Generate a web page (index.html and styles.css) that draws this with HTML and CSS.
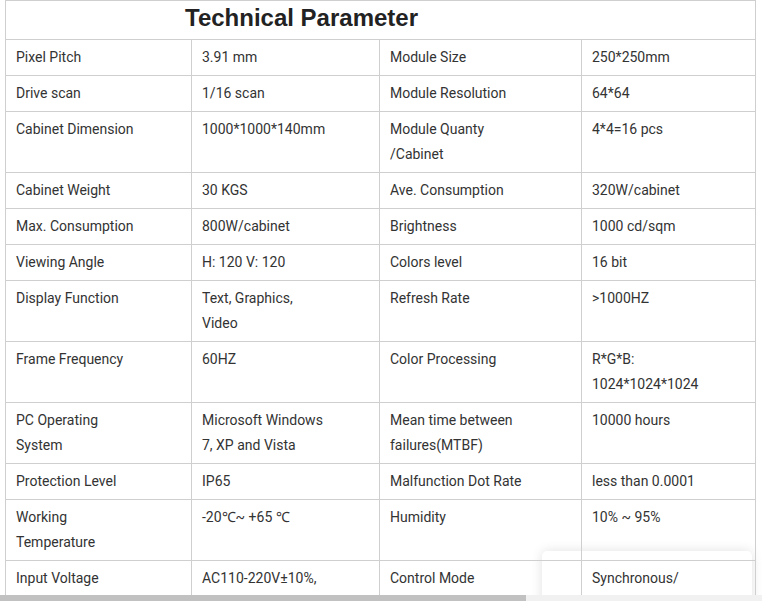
FILE: index.html
```html
<!DOCTYPE html>
<html lang="en">
<head>
<meta charset="utf-8">
<title>Technical Parameter</title>
<link rel="stylesheet" href="styles.css">
</head>
<body>
<div class="page">
  <div class="float-card"></div>
  <table class="spec">
    <colgroup>
      <col class="c1"><col class="c2"><col class="c3"><col class="c4">
    </colgroup>
    <thead>
      <tr><th colspan="4" class="title">Technical Parameter</th></tr>
    </thead>
    <tbody>
      <tr><td>Pixel Pitch</td><td>3.91 mm</td><td>Module Size</td><td>250*250mm</td></tr>
      <tr><td>Drive scan</td><td>1/16 scan</td><td>Module Resolution</td><td>64*64</td></tr>
      <tr><td>Cabinet Dimension</td><td>1000*1000*140mm</td><td>Module Quanty<br>/Cabinet</td><td>4*4=16 pcs</td></tr>
      <tr><td>Cabinet Weight</td><td>30 KGS</td><td>Ave. Consumption</td><td>320W/cabinet</td></tr>
      <tr><td>Max. Consumption</td><td>800W/cabinet</td><td>Brightness</td><td>1000 cd/sqm</td></tr>
      <tr><td>Viewing Angle</td><td>H: 120 V: 120</td><td>Colors level</td><td>16 bit</td></tr>
      <tr><td>Display Function</td><td>Text, Graphics,<br>Video</td><td>Refresh Rate</td><td>&gt;1000HZ</td></tr>
      <tr><td>Frame Frequency</td><td>60HZ</td><td>Color Processing</td><td>R*G*B:<br>1024*1024*1024</td></tr>
      <tr><td>PC Operating<br>System</td><td>Microsoft Windows<br>7, XP and Vista</td><td>Mean time between<br>failures(MTBF)</td><td>10000 hours</td></tr>
      <tr><td>Protection Level</td><td>IP65</td><td>Malfunction Dot Rate</td><td>less than 0.0001</td></tr>
      <tr><td>Working<br>Temperature</td><td>-20℃~ +65 ℃</td><td>Humidity</td><td>10% ~ 95%</td></tr>
      <tr><td>Input Voltage</td><td>AC110-220V±10%,</td><td>Control Mode</td><td>Synchronous/</td></tr>
    </tbody>
  </table>
</div>
<div class="hscroll"><div class="hscroll-thumb"></div></div>
</body>
</html>
```

FILE: styles.css
```css
html, body {
  margin: 0;
  padding: 0;
  background: #fff;
  overflow: hidden;
  height: 601px;
}

.page {
  position: relative;
  padding-left: 5px;
}

.spec {
  position: relative;
  z-index: 1;
  border-collapse: collapse;
  table-layout: fixed;
  width: 750px;
  background: transparent;
  font-family: Roboto, "Liberation Sans", Arial, sans-serif;
  font-size: 14px;
  color: #333;
}

.c1 { width: 186px; }
.c2 { width: 188px; }
.c3 { width: 202px; }
.c4 { width: 174px; }

.spec th,
.spec td {
  border: 1px solid #cfcfcf;
}

.title {
  font-family: "Liberation Sans", Arial, sans-serif;
  font-weight: bold;
  font-size: 24px;
  line-height: 33px;
  padding: 0 0 5px 179px;
  text-align: left;
  color: #222;
}

.spec td {
  padding: 5px 10px 5px 10px;
  line-height: 25px;
  vertical-align: top;
  text-align: left;
}

.float-card {
  position: absolute;
  z-index: 0;
  left: 542px;
  top: 551px;
  width: 210px;
  height: 80px;
  background: #fff;
  border-radius: 5px;
  box-shadow: 0 0 12px rgba(0, 0, 0, 0.12);
}

.hscroll {
  position: fixed;
  left: 0;
  bottom: 0;
  width: 762px;
  height: 6px;
  background: #f1f1f1;
  z-index: 5;
}

.hscroll-thumb {
  width: 526px;
  height: 6px;
  background: #c1c1c1;
}
```
